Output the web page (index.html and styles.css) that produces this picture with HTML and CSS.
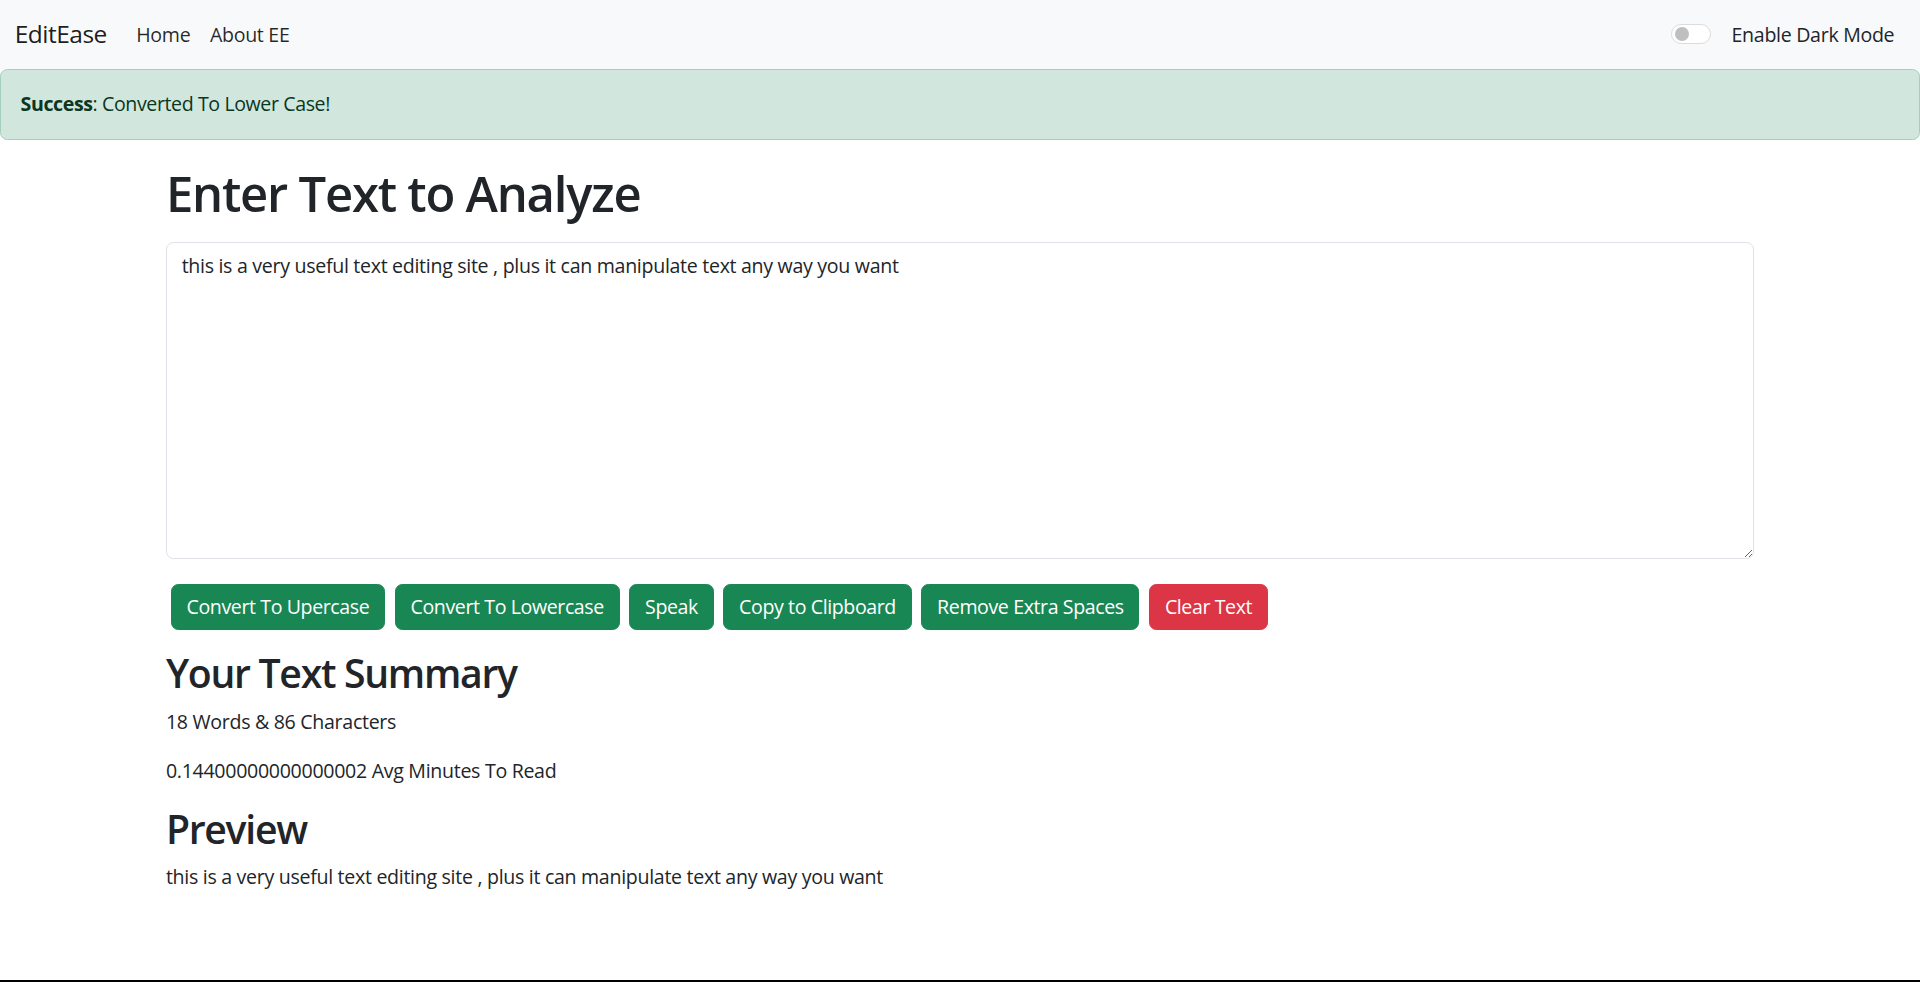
FILE: index.html
```html
<!DOCTYPE html>
<html lang="en">
<head>
<meta charset="utf-8">
<title>EditEase</title>
<link rel="stylesheet" href="styles.css">
</head>
<body>
<nav class="navbar">
  <div class="nav-left">
    <a class="brand" href="#">EditEase</a>
    <ul class="nav-links">
      <li><a class="nav-link" href="#">Home</a></li>
      <li><a class="nav-link" href="#">About EE</a></li>
    </ul>
  </div>
  <div class="mode-switch">
    <span class="switch"><span class="knob"></span></span>
    <label class="switch-label">Enable Dark Mode</label>
  </div>
</nav>
<div class="alert"><strong>Success</strong>: Converted To Lower Case!</div>
<main class="container first">
  <h1 class="title">Enter Text to Analyze</h1>
  <div class="field">
    <textarea class="text-input" rows="10">this is a very useful text editing site , plus it can manipulate text any way you want</textarea>
  </div>
  <div class="btn-row">
    <button class="btn btn-success">Convert To Upercase</button>
    <button class="btn btn-success">Convert To Lowercase</button>
    <button class="btn btn-success">Speak</button>
    <button class="btn btn-success">Copy to Clipboard</button>
    <button class="btn btn-success">Remove Extra Spaces</button>
    <button class="btn btn-danger">Clear Text</button>
  </div>
</main>
<section class="container summary">
  <h2 class="subtitle summary-title">Your Text Summary</h2>
  <p class="para">18 Words &amp; 86 Characters</p>
  <p class="para">0.14400000000000002 Avg Minutes To Read</p>
  <h2 class="subtitle preview-title">Preview</h2>
  <p class="para">this is a very useful text editing site , plus it can manipulate text any way you want</p>
</section>
<div class="bottom-edge"></div>
</body>
</html>
```
FILE: styles.css
```css
* { box-sizing: border-box; }
html, body { margin: 0; padding: 0; }
body {
  font-family: "Open Sans", "Noto Sans", sans-serif;
  font-size: 19.59px;
  line-height: 29.39px;
  letter-spacing: -0.3px;
  color: #212529;
  background: #fff;
}
.navbar {
  display: flex;
  align-items: center;
  justify-content: space-between;
  height: 68.6px;
  padding: 9.8px 14.69px;
  background: #f8f9fa;
}
.nav-left { display: flex; align-items: center; }
.brand {
  font-size: 24.49px;
  line-height: 36.74px;
  padding: 6.12px 0;
  margin-right: 19.59px;
  color: rgba(0,0,0,0.9);
  text-decoration: none;
  letter-spacing: -0.5px;
}
.nav-links { display: flex; list-style: none; margin: 0; padding: 0; }
.nav-link {
  display: block;
  padding: 9.8px;
  color: rgba(0,0,0,0.85);
  text-decoration: none;
}
.mode-switch { display: flex; align-items: center; margin-right: 11px; }
.switch {
  position: relative;
  display: block;
  width: 39.6px;
  height: 19.6px;
  border: 1px solid #dcdcdc;
  border-radius: 10px;
  background: #fff;
  margin-right: 21px;
}
.knob {
  position: absolute;
  left: 3px;
  top: 1.8px;
  width: 14px;
  height: 14px;
  border-radius: 50%;
  background: #bfbfbf;
}
.switch-label { color: #212529; }
.alert {
  height: 71px;
  padding: 19.59px;
  background: #d1e7dd;
  border: 1px solid #a3cfbb;
  border-radius: 7.35px;
  color: #0a3622;
  letter-spacing: -0.4px;
}
.alert strong { font-weight: 700; }
.container {
  max-width: 1617.5px;
  margin: 0 auto;
  padding: 0 14.69px;
}
.first { padding-top: 24px; }
.title {
  margin: 0 0 20px;
  font-size: 48.98px;
  line-height: 58.78px;
  font-weight: 600;
  letter-spacing: -0.025em;
}
.field { margin-bottom: 19.59px; }
.text-input {
  display: block;
  width: 100%;
  height: 317px;
  padding: 7.35px 14.69px;
  font: inherit;
  letter-spacing: inherit;
  color: #212529;
  border: 1px solid #dee2e6;
  border-radius: 7.35px;
  resize: vertical;
  outline: none;
}
.btn-row {
  display: flex;
  gap: 9.8px;
  padding: 4.9px;
}
.btn {
  font: inherit;
  letter-spacing: -0.4px;
  color: #fff;
  padding: 7.35px 14.69px;
  border: 1px solid transparent;
  border-radius: 7.35px;
  height: 46.5px;
  cursor: pointer;
}
.btn-success { background: #198754; border-color: #198754; }
.btn-danger { background: #dc3545; border-color: #dc3545; }
.summary { padding-top: 13.3px; }
.subtitle {
  margin: 0 0 9.8px;
  font-size: 39.18px;
  line-height: 47.02px;
  font-weight: 600;
  letter-spacing: -0.033em;
}
.summary-title { margin-bottom: 11.8px; }
.preview-title { margin-top: 4.2px; }
.para { margin: 0 0 19.59px; }
.bottom-edge {
  position: fixed;
  left: 0;
  right: 0;
  bottom: 0;
  height: 2px;
  background: #000;
}
```
